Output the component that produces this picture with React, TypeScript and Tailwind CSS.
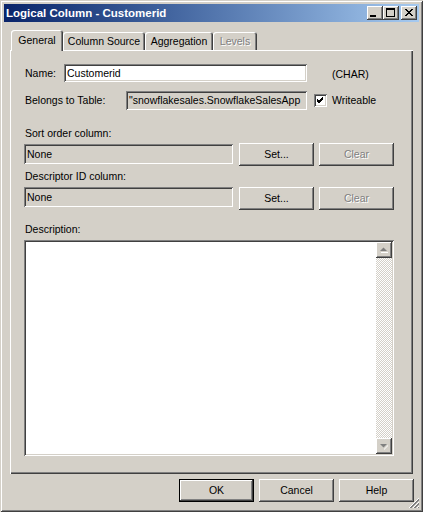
import React from "react";

// Win2000 style bevels
const raised =
  "shadow-[inset_-1px_-1px_0_#404040,inset_1px_1px_0_#ffffff,inset_-2px_-2px_0_#808080,inset_2px_2px_0_#d4d0c8]";
const sunken =
  "shadow-[inset_1px_1px_0_#808080,inset_-1px_-1px_0_#ffffff,inset_2px_2px_0_#404040,inset_-2px_-2px_0_#d4d0c8]";

function TitleBtn({ children, className = "" }: { children: React.ReactNode; className?: string }) {
  return (
    <div className={`w-[16px] h-[14px] bg-[#d4d0c8] relative ${raised} ${className}`}>{children}</div>
  );
}

function Btn({
  label,
  disabled,
  isDefault,
}: {
  label: string;
  disabled?: boolean;
  isDefault?: boolean;
}) {
  return (
    <div
      className={`w-[75px] h-[23px] flex items-center justify-center bg-[#d4d0c8] ${raised} ${
        isDefault ? "border border-black" : ""
      } ${disabled ? "text-[#808080] [text-shadow:1px_1px_0_#ffffff]" : "text-black"}`}
    >
      {label}
    </div>
  );
}

function Tab({ label, selected, disabled, w }: { label: string; selected?: boolean; disabled?: boolean; w: string }) {
  return (
    <div
      className={`${w} flex items-center justify-center bg-[#d4d0c8] rounded-t-[3px] shadow-[inset_1px_1px_0_#ffffff,inset_-1px_0_0_#404040,inset_-2px_0_0_#808080] ${
        selected ? "h-[21px] relative z-10 pb-[1px]" : "h-[18px] mb-[1px]"
      } ${disabled ? "text-[#808080] [text-shadow:1px_1px_0_#ffffff]" : "text-black"}`}
    >
      {label}
    </div>
  );
}

export default function App() {
  return (
    <div className="w-[423px] h-[512px] bg-[#d4d0c8] p-[4px] relative flex flex-col shadow-[inset_1px_1px_0_#d4d0c8,inset_-1px_-1px_0_#404040,inset_2px_2px_0_#ffffff,inset_-2px_-2px_0_#808080] [font-family:'Liberation_Sans',Arial,sans-serif] text-[10.5px] leading-[13px] text-black">
      {/* title bar */}
      <div className="h-[18px] flex items-center bg-gradient-to-r from-[#0a246a] to-[#a6caf0] pl-[2px] pr-[2px]">
        <span className="flex-1 text-white font-bold text-[11.5px]">Logical Column - Customerid</span>
        <TitleBtn>
          <div className="absolute left-[3px] top-[9px] w-[6px] h-[2px] bg-black" />
        </TitleBtn>
        <TitleBtn>
          <div className="absolute left-[3px] top-[2px] w-[9px] h-[9px] border border-black border-t-2" />
        </TitleBtn>
        <TitleBtn className="ml-[2px]">
          <svg width="16" height="14" className="absolute left-0 top-0">
            <path d="M4 3 L11 10 M5 3 L12 10 M11 3 L4 10 M12 3 L5 10" stroke="#000" strokeWidth="1" shapeRendering="crispEdges" />
          </svg>
        </TitleBtn>
      </div>

      <div className="flex-1 px-[6px] pt-[8px] flex flex-col">
        {/* tabs */}
        <div className="h-[21px] flex items-end pl-[1px]">
          <Tab label="General" selected w="w-[52px]" />
          <Tab label="Column Source" w="w-[82px]" />
          <Tab label="Aggregation" w="w-[68px]" />
          <Tab label="Levels" disabled w="w-[44px]" />
        </div>

        {/* tab page */}
        <div className="h-[424px] mt-[-1px] pl-[14px] pt-[14px] flex flex-col shadow-[inset_1px_1px_0_#ffffff,inset_-1px_-1px_0_#404040,inset_-2px_-2px_0_#808080]">
          <div className="h-[18px] flex items-center">
            <span className="w-[40px] pl-[1px]">Name:</span>
            <div className={`w-[243px] h-[18px] bg-white flex items-center pl-[3px] ${sunken}`}>Customerid</div>
            <span className="ml-[25px] pt-[2px]">(CHAR)</span>
          </div>

          <div className="h-[19px] mt-[9px] flex items-center">
            <span className="w-[102px] pl-[1px]">Belongs to Table:</span>
            <div className={`w-[181px] h-[19px] bg-[#d4d0c8] flex items-center pl-[3px] overflow-hidden whitespace-nowrap ${sunken}`}>
              "snowflakesales.SnowflakeSalesApp
            </div>
            <div className={`ml-[7px] w-[13px] h-[13px] bg-white relative ${sunken}`}>
              <svg width="13" height="13" className="absolute left-0 top-0">
                <path d="M3 5 L5 7 L9 3 M3 6 L5 8 L9 4 M3 7 L5 9 L9 5" stroke="#000" strokeWidth="1" fill="none" shapeRendering="crispEdges" />
              </svg>
            </div>
            <span className="ml-[5px]">Writeable</span>
          </div>

          <span className="mt-[17px] pl-[1px]">Sort order column:</span>
          <div className="mt-[3px] h-[23px] flex items-start">
            <div className={`mt-[1px] w-[209px] h-[20px] bg-[#d4d0c8] flex items-center pl-[3px] ${sunken}`}>None</div>
            <div className="ml-[6px]">
              <Btn label="Set..." />
            </div>
            <div className="ml-[5px]">
              <Btn label="Clear" disabled />
            </div>
          </div>

          <span className="mt-[4px] pl-[1px]">Descriptor ID column:</span>
          <div className="mt-[4px] h-[23px] flex items-start">
            <div className={`w-[209px] h-[20px] bg-[#d4d0c8] flex items-center pl-[3px] ${sunken}`}>None</div>
            <div className="ml-[6px]">
              <Btn label="Set..." />
            </div>
            <div className="ml-[5px]">
              <Btn label="Clear" disabled />
            </div>
          </div>

          <span className="mt-[13px] pl-[1px]">Description:</span>
          <div className={`mt-[4px] w-[370px] h-[216px] bg-white p-[2px] flex justify-end ${sunken}`}>
            <div className="w-[16px] h-full flex flex-col bg-[repeating-conic-gradient(#d4d0c8_0%_25%,#ffffff_0%_50%)] bg-[length:2px_2px]">
              <div className={`w-[16px] h-[16px] bg-[#d4d0c8] relative ${raised}`}>
                <svg width="16" height="16" className="absolute left-0 top-0">
                  <path d="M5 10 L12 10 L12 11 L5 11 Z" fill="#ffffff" />
                  <path d="M4 9 L11 9 L7.5 5.5 Z" fill="#808080" />
                </svg>
              </div>
              <div className="flex-1" />
              <div className={`w-[16px] h-[16px] bg-[#d4d0c8] relative ${raised}`}>
                <svg width="16" height="16" className="absolute left-0 top-0">
                  <path d="M8 11 L12 7 L12 8 L8 12 Z" fill="#ffffff" />
                  <path d="M4 6 L11 6 L7.5 9.5 Z" fill="#808080" />
                </svg>
              </div>
            </div>
          </div>
        </div>

        {/* dialog buttons */}
        <div className="mt-[5px] mr-[-1px] flex justify-end gap-[5px]">
          <Btn label="OK" isDefault />
          <Btn label="Cancel" />
          <Btn label="Help" />
        </div>
      </div>

      {/* size grip */}
      <svg width="12" height="12" className="absolute right-[3px] bottom-[3px]">
        <path d="M11 1 L1 11 M11 5 L5 11 M11 9 L9 11" stroke="#ffffff" strokeWidth="1" />
        <path d="M11 2 L2 11 M11 3 L3 11 M11 6 L6 11 M11 7 L7 11 M11 10 L10 11" stroke="#808080" strokeWidth="1" />
      </svg>
    </div>
  );
}
